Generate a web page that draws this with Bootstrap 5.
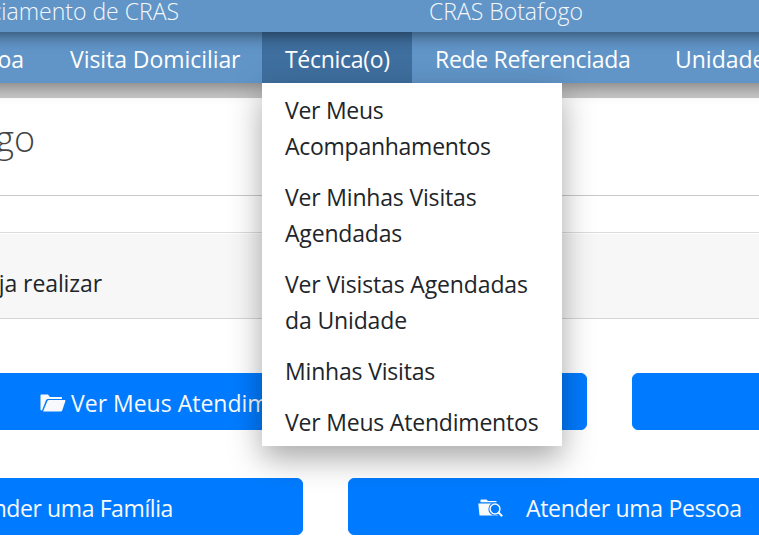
<!DOCTYPE html>
<html lang="pt-BR">
<head>
<meta charset="utf-8">
<meta name="viewport" content="width=device-width, initial-scale=1">
<title>CRAS Botafogo</title>
<link href="https://cdn.jsdelivr.net/npm/bootstrap@5.3.0/dist/css/bootstrap.min.css" rel="stylesheet">
<style>
  body { font-family: "Open Sans", "Noto Sans", sans-serif; font-size: 23px; line-height: 36px; color: #212529; height: 539px; }
  .app-header { height: 32px; margin: 0 -30px; padding: 0 30px; background: #6195c8; color: #f5f8fb; font-weight: 300; box-shadow: 0 3px 16px rgba(0,0,0,.5); z-index: 3; }
  .app-header .system-name { width: 179px; }
  .app-header .unit-name { margin-left: 250px; }
  .app-header span { line-height: 23px; }
  .app-nav { height: 51px; margin: 0 -30px; padding: 0 30px; background: #6195c8; box-shadow: 0 3px 16px rgba(0,0,0,.4); z-index: 2; }
  .app-nav .nav-link { color: #fff; height: 51px; padding: 9px 0 6px 23px; }
  .w-pessoa { width: 47px; }
  .w-visita { width: 215px; }
  .w-tecnica { width: 150px; }
  .w-rede { width: 240px; }
  .w-pessoa .nav-link { padding: 9px 23px 6px 0; }
  .app-nav .nav-link.active { background: #3f6f9f; }
  .app-nav .dropdown-menu { top: 51px; left: 0; width: 300px; height: 363px; padding: 0; border: 0; border-radius: 0; font-size: 23px; box-shadow: 0 12px 30px rgba(0,0,0,.35); }
  .app-nav .dropdown-item { padding: 9px 0 6px 23px; color: #212529; white-space: normal; line-height: 36px; }
  .t-visita { letter-spacing: -.06px; }
  .t-tec { letter-spacing: -.3px; }
  .t-rede { letter-spacing: -.31px; }
  .m1 { letter-spacing: -.27px; }
  .m2 { letter-spacing: -.18px; }
  .m3 { letter-spacing: -.14px; }
  .m4 { letter-spacing: -.18px; }
  .m5 { letter-spacing: -.2px; }
  .t-b3 { letter-spacing: -.4px; }
  .t-b4 { letter-spacing: -.32px; }
  .strip { height: 15px; background: #c8c8c8; }
  .page-title { height: 97px; font-size: 36px; font-weight: 300; width: 35px; line-height: 82px; color: #444; }
  .rule { height: 1px; background: #c8c8c8; }
  .panel-head { height: 87px; margin-top: 36px; background: #f7f7f7; border-top: 1px solid #dcdcdc; border-bottom: 1px solid #d5d5d5; box-shadow: inset 0 1px #fff; }
  .panel-head span { width: 102px; padding-top: 32px; letter-spacing: -.1px; }
  .act { height: 57px; --bs-btn-bg: #007bff; --bs-btn-border-color: #007bff; --bs-btn-color: #f8f9fa; font-size: 23px; line-height: 36px; border-radius: 6px; padding: 3px 0 0; }
  .row-one { margin-top: 54px; height: 57px; gap: 45px; margin-left: -8px; }
  .row-two { margin-top: 48px; height: 57px; gap: 45px; margin-left: -8px; }
  .b1 { width: 595px; padding-left: 47px; gap: 5px; } .b2 { width: 300px; }
  .b3 { width: 311px; padding-right: 129px; } .b4 { width: 600px; padding-left: 129px; gap: 22px; }
</style>
<script src="https://cdn.jsdelivr.net/npm/bootstrap@5.3.0/dist/js/bootstrap.bundle.min.js"></script>
</head>
<body class="bg-white overflow-hidden">
<header class="app-header d-flex position-relative text-nowrap">
  <div class="system-name d-flex justify-content-end"><span class="t-sys">Gerenciamento de CRAS</span></div>
  <span class="unit-name t-unit">CRAS Botafogo</span>
</header>
<nav class="app-nav position-relative">
  <ul class="nav flex-nowrap text-nowrap">
    <li class="nav-item w-pessoa flex-shrink-0 d-flex justify-content-end"><a class="nav-link" href="#"><span>Pessoa</span></a></li>
    <li class="nav-item w-visita flex-shrink-0"><a class="nav-link" href="#"><span class="t-visita">Visita Domiciliar</span></a></li>
    <li class="nav-item w-tecnica flex-shrink-0 dropdown"><a class="nav-link active" href="#"><span class="t-tec">Técnica(o)</span></a>
      <div class="dropdown-menu show">
        <a class="dropdown-item" href="#"><span class="m1">Ver Meus<br>Acompanhamentos</span></a>
        <a class="dropdown-item" href="#"><span class="m2">Ver Minhas Visitas<br>Agendadas</span></a>
        <a class="dropdown-item" href="#"><span class="m3">Ver Visistas Agendadas<br>da Unidade</span></a>
        <a class="dropdown-item" href="#"><span class="m4">Minhas Visitas</span></a>
        <a class="dropdown-item" href="#"><span class="m5">Ver Meus Atendimentos</span></a>
      </div>
    </li>
    <li class="nav-item w-rede flex-shrink-0"><a class="nav-link" href="#"><span class="t-rede">Rede Referenciada</span></a></li>
    <li class="nav-item flex-shrink-0"><a class="nav-link" href="#"><span class="t-uni">Unidade</span></a></li>
  </ul>
</nav>
<main class="text-nowrap">
  <div class="strip"></div>
  <h1 class="page-title d-flex justify-content-end m-0"><span>CRAS Botafogo</span></h1>
  <div class="rule"></div>
  <div class="panel-head"><span class="d-flex justify-content-end t-panel">Escolha a ação que deseja realizar</span></div>
  <div class="row-one d-flex">
    <a class="btn btn-primary act b1 flex-shrink-0 d-flex align-items-center" href="#">
      <svg width="26" height="18" viewBox="0 0 26 18" fill="#f8f9fa"><path d="M.5 16V1.200Q.5.5 1.300.5H8l2 2.500h11q1 0 1 .8V5H8Q6.600 5 6 6.200L2 16.500Z"/><path d="M3 17.500 7.400 7q.5-1 1.600-1h15.800q.9 0 .6 1L22.200 16.500q-.4 1-1.400 1Z"/></svg>
      <span class="t-b1">Ver Meus Atendimentos</span></a>
    <a class="btn btn-primary act b2 flex-shrink-0" href="#"></a>
  </div>
  <div class="row-two d-flex">
    <a class="btn btn-primary act b3 flex-shrink-0 d-flex align-items-center justify-content-end" href="#"><span class="t-b3">Atender uma Família</span></a>
    <a class="btn btn-primary act b4 flex-shrink-0 d-flex align-items-center" href="#">
      <svg width="26" height="18" viewBox="0 0 26 18"><path fill="#f8f9fa" d="M2.500 3.300V1Q2.500.5 3 .5h5.500L10 2h8.500v1.300Z"/><path fill="#f8f9fa" d="M.3 4.500H20V16.500H1.500Z"/><circle cx="17" cy="10" r="6.600" fill="#007bff"/><circle cx="17" cy="10" r="4.900" fill="#007bff" stroke="#f8f9fa" stroke-width="1.500"/><path stroke="#f8f9fa" stroke-width="2" d="m20.500 13.500 3.700 3.700"/></svg>
      <span class="t-b4">Atender uma Pessoa</span></a>
  </div>
</main>
</body>
</html>
